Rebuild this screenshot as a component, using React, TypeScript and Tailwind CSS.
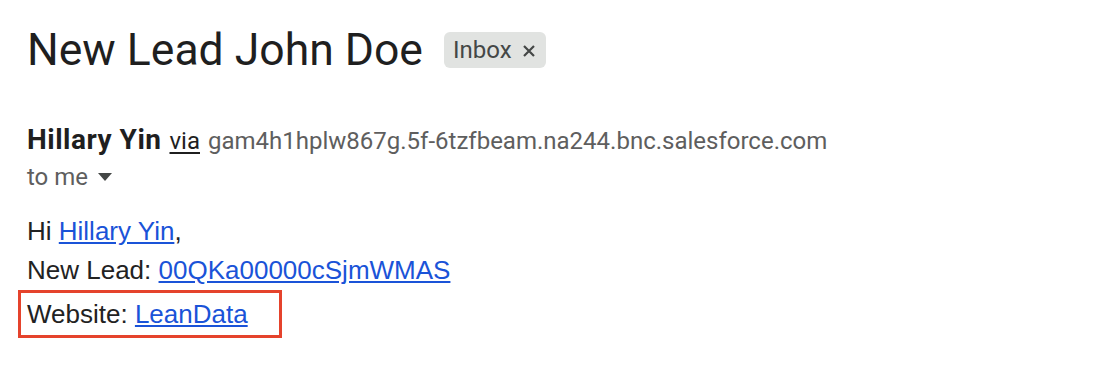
import React from 'react';

export default function App() {
  return (
    <div className="w-[1104px] h-[392px] bg-white pl-[27px] pt-[22px]">
      {/* Subject */}
      <div className="flex items-center gap-[21px] h-[56px]">
        <h1 className="text-[44.5px] leading-[56px] text-[#1f1f1f] font-['Roboto',sans-serif] font-normal">
          New Lead John Doe
        </h1>
        <span className="flex items-center gap-[10px] h-[36px] pl-[9px] pr-[10px] rounded-[6px] bg-[#e1e3e1] text-[#444746] text-[24px] font-['Roboto',sans-serif]">
          Inbox
          <svg width="14" height="14" viewBox="0 0 14 14" className="mt-[2px]">
            <path d="M2 2 L12 12 M12 2 L2 12" stroke="#444746" strokeWidth="2.2" />
          </svg>
        </span>
      </div>

      {/* Sender */}
      <div className="mt-[44px] flex items-baseline gap-[8px] font-['Roboto',sans-serif] text-[24px] leading-[36px]">
        <span className="text-[28px] font-bold tracking-[0.5px] text-[#1f1f1f]">Hillary Yin</span>
        <span className="text-[#1f1f1f] underline underline-offset-[3px]">via</span>
        <span className="text-[#5e5e5e]">gam4h1hplw867g.5f-6tzfbeam.na244.bnc.salesforce.com</span>
      </div>
      <div className="flex items-center gap-[10px] font-['Roboto',sans-serif] text-[24px] leading-[36px] text-[#5e5e5e]">
        to me
        <svg width="14" height="8" viewBox="0 0 14 8">
          <path d="M0 0 L14 0 L7 8 Z" fill="#444746" />
        </svg>
      </div>

      {/* Body */}
      <div className="mt-[17px] font-['Liberation_Sans',Arial,sans-serif] text-[26px] leading-[39px] text-[#222]">
        <div>
          Hi <a className="text-[#1a53d8] underline">Hillary Yin</a>,
        </div>
        <div>
          New Lead: <a className="text-[#1a53d8] underline">00QKa00000cSjmWMAS</a>
        </div>
        <div className="-ml-[9px] w-[264px] border-[3px] border-[#e5432c] pl-[6px] leading-[42px]">
          Website: <a className="text-[#1a53d8] underline">LeanData</a>
        </div>
      </div>
    </div>
  );
}
